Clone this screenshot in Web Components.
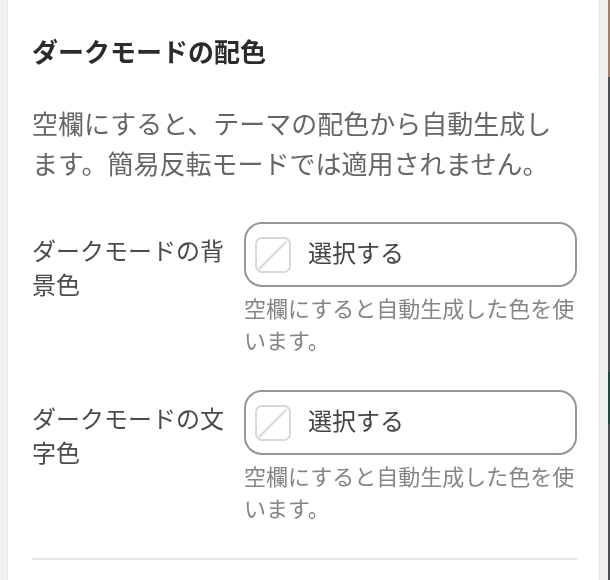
<!DOCTYPE html>
<html lang="ja">
<head>
<meta charset="utf-8">
<title>ダークモードの配色</title>
<style>
  html, body { margin: 0; height: 100%; overflow: hidden; background: #f0f0f0; }
  body { font-family: "Noto Sans CJK JP", "Noto Sans", sans-serif; }
</style>
</head>
<body>
<settings-shell>
  <settings-section heading="ダークモードの配色" note="空欄にすると、テーマの配色から自動生成します。簡易反転モードでは適用されません。">
    <color-field label="ダークモードの背景色" help="空欄にすると自動生成した色を使います。"></color-field>
    <color-field label="ダークモードの文字色" help="空欄にすると自動生成した色を使います。"></color-field>
  </settings-section>
</settings-shell>

<script>
class SettingsShell extends HTMLElement {
  constructor() {
    super();
    this.attachShadow({ mode: 'open' });
    this.shadowRoot.innerHTML = `
    <style>
      :host {
        display: grid;
        grid-template-columns: 7px 1fr 8px 2px;
        width: 610px;
        height: 580px;
        overflow: hidden;
        filter: blur(0.75px);
      }
      .gutter { background: #f0f0f0; }
      .panel { background: #fff; border-left: 1px solid #e6e6e6; border-right: 1px solid #e6e6e6; padding: 0 22px 0 24px; min-width: 0; }
      .edge { background: linear-gradient(#a87a68 0 77px, #4a4f55 77px 372px, #1f4a44 372px 424px, #4a4f55 424px); }
    </style>
    <div class="gutter"></div>
    <div class="panel"><slot></slot></div>
    <div class="gutter"></div>
    <div class="edge"></div>
    `;
  }
}

class SettingsSection extends HTMLElement {
  constructor() {
    super();
    this.attachShadow({ mode: 'open' });
  }

  connectedCallback() {
    this.shadowRoot.innerHTML = `
    <style>
      :host { display: block; padding-top: 32px; }
      h2 { margin: 0; font-size: 26px; line-height: 38px; font-weight: 700; color: #2b2b2b; }
      p { margin: 33px 0 0; font-size: 26px; line-height: 40px; color: #666; }
      .fields { display: flex; flex-direction: column; gap: 35px; margin-top: 39px; }
      hr { border: 0; height: 2px; background: #e6e6e6; margin: 35px 0 0; }
    </style>
    <h2>${this.getAttribute('heading')}</h2>
    <p>${this.getAttribute('note')}</p>
    <div class="fields"><slot></slot></div>
    <hr>
    `;
  }
}

class ColorField extends HTMLElement {
  constructor() {
    super();
    this.attachShadow({ mode: 'open' });
  }

  connectedCallback() {
    this.shadowRoot.innerHTML = `
    <style>
      :host { display: grid; grid-template-columns: 212px 1fr; }
      .label { font-size: 24px; line-height: 34px; color: #4a4a4a; padding-top: 11px; }
      button {
        display: flex;
        align-items: center;
        gap: 17px;
        width: 100%;
        height: 65px;
        box-sizing: border-box;
        padding: 0 9px;
        background: #fff;
        border: 2px solid #969696;
        border-radius: 18px;
        font: inherit;
        font-size: 24px;
        color: #444;
      }
      svg { flex: none; }
      span { margin-bottom: 7px; }
      .help { margin-top: 4px; font-size: 22px; line-height: 32px; color: #858585; }
    </style>
    <div class="label">${this.getAttribute('label')}</div>
    <div>
      <button type="button">
        <svg width="36" height="36" viewBox="0 0 36 36" fill="none" stroke="#d8d8d8" stroke-width="2">
          <rect x="1" y="1" width="34" height="34" rx="6"/>
          <path d="M4 32 32 4"/>
        </svg>
        <span>選択する</span>
      </button>
      <div class="help">${this.getAttribute('help')}</div>
    </div>
    `;
  }
}

customElements.define('settings-shell', SettingsShell);
customElements.define('settings-section', SettingsSection);
customElements.define('color-field', ColorField);
</script>
</body>
</html>
